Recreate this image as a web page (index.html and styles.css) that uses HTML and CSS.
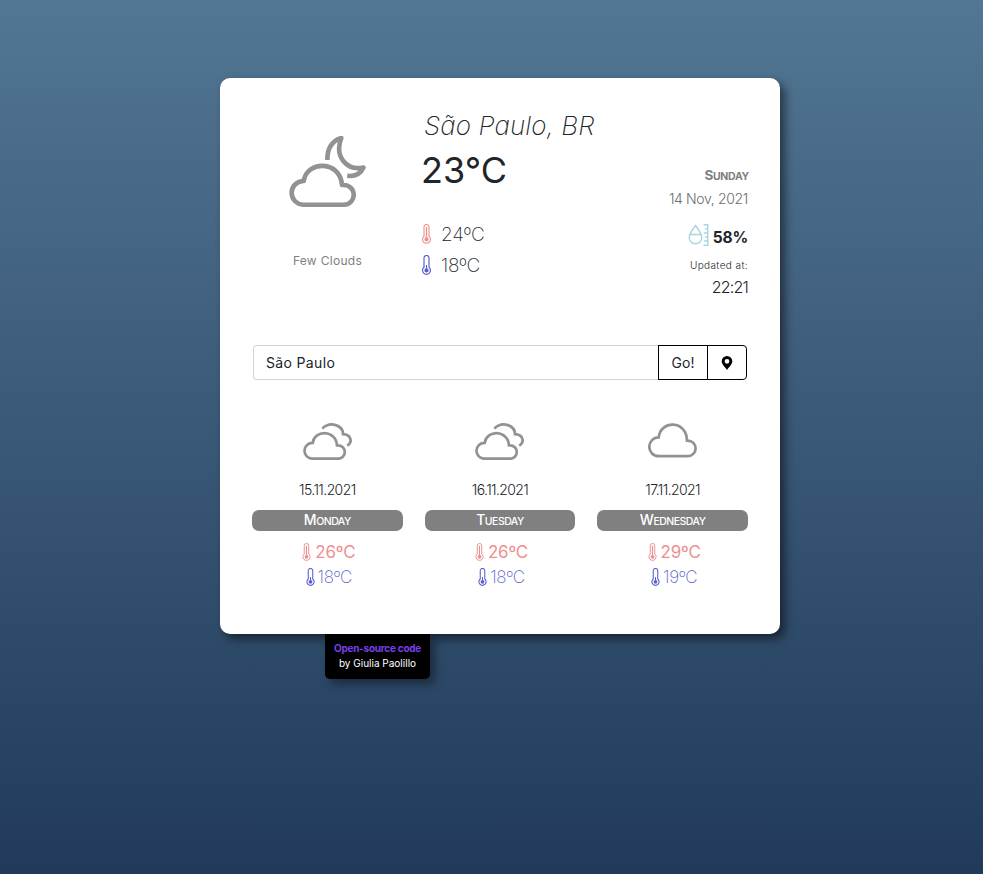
FILE: index.html
```html
<!DOCTYPE html>
<html lang="en">
<head>
<meta charset="utf-8">
<title>Weather</title>
<link rel="stylesheet" href="styles.css">
</head>
<body>
<svg class="defs" width="0" height="0" aria-hidden="true">
  <symbol id="thermo" viewBox="0 0 9 20">
    <path d="M2 12.2V3a2.5 2.5 0 0 1 5 0v9.2a4 4 0 1 1-5 0z" fill="none" stroke="currentColor" stroke-width="1.1"/>
    <path d="M4.5 3v12" stroke="currentColor" stroke-width="1.3"/>
    <circle cx="4.5" cy="15.4" r="2.1" fill="currentColor"/>
  </symbol>
  <symbol id="thermo-low" viewBox="0 0 9 20">
    <path d="M2 12.2V3a2.5 2.5 0 0 1 5 0v9.2a4 4 0 1 1-5 0z" fill="none" stroke="currentColor" stroke-width="1.2"/>
    <path d="M4.5 10v5" stroke="currentColor" stroke-width="1.1"/>
    <circle cx="4.5" cy="15.4" r="2.1" fill="currentColor"/>
  </symbol>
  <symbol id="clouds" viewBox="0 0 49 37">
    <g fill="none" stroke="#929292" stroke-width="2.7">
      <path d="M9.1 35.7H35.1a6.7 6.7 0 0 0 0-13.400H34C33 6.600 11.500 6.600 9.700 19.900A7.900 7.900 0 0 0 9.100 35.700z"/>
      <path d="M19.300 5.600C27.500-2.300 40 2.400 40 11.200C47.800 11.500 50.200 19 44.200 22.600"/>
    </g>
  </symbol>
</svg>
<main class="card">
  <section class="current">
    <div class="sky">
      <svg class="sky-icon" viewBox="0 0 77 72" fill="none" stroke="#929292" stroke-width="4.600" stroke-linejoin="round">
        <path d="M14.200 68.700H54.900A9.850 9.850 0 0 0 54.900 49H53C51.500 24.200 17.500 24.200 14.800 45A11.850 11.850 0 0 0 14.200 68.700z"/>
        <path d="M38.400 24C38 13 43 4.500 52.300 2C45 21 58 35 74.500 31.500C71.500 38 65 40.500 58.200 39.800"/>
      </svg>
      <div class="sky-label"><span>Few Clouds</span></div>
    </div>
    <div class="now">
      <h1 class="city"><span>São Paulo, BR</span></h1>
      <div class="temp"><span>23°C</span></div>
      <div class="range hot"><svg><use href="#thermo"/></svg><span>24ºC</span></div>
      <div class="range cold"><svg><use href="#thermo-low"/></svg><span>18ºC</span></div>
    </div>
    <div class="info">
      <div class="weekday"><span>Sunday</span></div>
      <div class="date"><span>14 Nov, 2021</span></div>
      <div class="humidity">
        <svg viewBox="0 0 21 22" fill="none" stroke="#a5d6e1" stroke-width="1.400"><path d="M7.500 1.500C5 5 1.200 9.500 1.200 13.500a6.300 6.300 0 0 0 12.600 0C13.800 9.500 10 5 7.500 1.500zM2.500 10.500H12.500"/><path d="M15.500.8H19.800V21.200H15.500M17 4.900H20M16 9H20M17 13H20M16 17H20"/></svg>
        <span>58%</span>
      </div>
      <div class="updated"><span>Updated at:</span></div>
      <div class="clock"><span>22:21</span></div>
    </div>
  </section>
  <form class="search">
    <div class="field"><span>São Paulo</span></div>
    <button type="button" class="go"><span>Go!</span></button>
    <button type="button" class="locate"><svg viewBox="0 0 12 14"><path fill-rule="evenodd" d="M6 0a5.300 5.300 0 0 1 5.300 5.300C11.300 8.500 8 11 6 14C4 11 .7 8.500.7 5.300A5.300 5.300 0 0 1 6 0zM6 2.900a2.400 2.400 0 1 0 0 4.800a2.400 2.400 0 0 0 0-4.800z"/></svg></button>
  </form>
  <section class="days">
    <article class="day">
      <svg class="day-icon" viewBox="0 0 49 37"><use href="#clouds"/></svg>
      <div class="day-date"><span>15.11.2021</span></div>
      <div class="day-name"><span>Monday</span></div>
      <div class="high"><svg><use href="#thermo"/></svg><span>26ºC</span></div>
      <div class="low"><svg><use href="#thermo-low"/></svg><span>18ºC</span></div>
    </article>
    <article class="day">
      <svg class="day-icon" viewBox="0 0 49 37"><use href="#clouds"/></svg>
      <div class="day-date"><span>16.11.2021</span></div>
      <div class="day-name"><span>Tuesday</span></div>
      <div class="high"><svg><use href="#thermo"/></svg><span>26ºC</span></div>
      <div class="low"><svg><use href="#thermo-low"/></svg><span>18ºC</span></div>
    </article>
    <article class="day">
      <svg class="day-icon" viewBox="0 0 49 37" fill="none" stroke="#929292" stroke-width="2.700"><path d="M10.700 32.600H39.800A7.800 7.800 0 0 0 39.800 17H39C38.500-3.700 12.500-3.700 10.700 13.800A9.400 9.400 0 0 0 10.700 32.600z" transform="translate(0 .6)"/></svg>
      <div class="day-date"><span>17.11.2021</span></div>
      <div class="day-name"><span>Wednesday</span></div>
      <div class="high"><svg><use href="#thermo"/></svg><span>29ºC</span></div>
      <div class="low"><svg><use href="#thermo-low"/></svg><span>19ºC</span></div>
    </article>
  </section>
</main>
<footer class="credit">
  <a><span>Open-source code</span></a>
  <div><span>by Giulia Paolillo</span></div>
</footer>
</body>
</html>
```
FILE: styles.css
```css
* { box-sizing: border-box; }
html { height: 100%; }
body {
  margin: 0;
  min-height: 874px;
  padding: 78px 0 0 220px;
  background: linear-gradient(#527693, #213a5a);
  font-family: Inter, "Open Sans", sans-serif;
  color: #212529;
  overflow: hidden;
}
.defs { display: block; position: absolute; }
svg { display: block; flex: none; }
.card {
  position: relative;
  width: 560px;
  height: 556px;
  padding: 30px 32px 0;
  background: #fff;
  border-radius: 10px;
  box-shadow: 5px 5px 10px rgba(0, 0, 0, .5);
}
.current {
  display: grid;
  grid-template-columns: 150px 1fr 130px;
  column-gap: 20px;
  height: 237px;
}
.sky { padding-top: 28px; }
.sky-icon { width: 77px; height: 72px; margin-left: 36.5px; }
.sky-label { height: 20px; line-height: 20px; margin-top: 43px; padding-left: 1px; text-align: center; font-size: 12px; letter-spacing: .3px; color: #808080; }
.city { margin: 0; padding-left: 2px; font-size: 26px; line-height: 36px; font-weight: 250; font-style: italic; letter-spacing: .1px; white-space: nowrap; }
.temp { font-size: 36px; line-height: 44px; margin: 4px 0 0 -1px; }
.range { display: flex; align-items: center; gap: 10px; height: 31px; font-size: 19px; font-weight: 200; letter-spacing: -.3px; }
.range svg { width: 9px; height: 20px; }
.range span { padding-top: 1px; }
.hot { margin-top: 26px; }
.hot svg { color: #ee9090; }
.cold svg { color: #5c60cf; }
.info { display: flex; flex-direction: column; align-items: flex-end; padding-top: 55px; }
.weekday span, .day-name span { display: inline-block; text-transform: uppercase; }
.weekday { font-size: 10.5px; line-height: 24px; height: 24px; font-weight: 700; letter-spacing: -.3px; margin-right: -1px; color: #808080; }
.weekday span::first-letter { font-size: 13.5px; }
.date { font-size: 14px; line-height: 24px; font-weight: 300; letter-spacing: -.35px; color: #6d6d6d; }
.humidity { display: flex; align-items: center; gap: 4px; height: 24px; margin-top: 14px; font-size: 15.5px; font-weight: 700; letter-spacing: -.2px; }
.humidity svg { width: 21px; height: 22px; margin-top: -4px; }
.updated { font-size: 10px; line-height: 16px; margin-top: 8px; letter-spacing: .4px; font-weight: 350; }
.clock { font-size: 16px; line-height: 24px; margin-top: 2px; font-weight: 350; letter-spacing: -.8px; }
.search { display: flex; height: 35px; margin: 0 1px; }
.field { flex: 1; border: 1px solid #ced4da; border-right: 0; border-radius: 4px 0 0 4px; padding-left: 12px; line-height: 33px; font-size: 14px; letter-spacing: .35px; }
.search button { display: flex; align-items: center; justify-content: center; padding: 0; border: 1px solid #000; background: #fff; font: 14px Inter, sans-serif; color: #212529; }
.go { width: 50px; }
.search .locate { width: 40px; margin-left: -1px; border-radius: 0 4px 4px 0; }
.locate svg { width: 12px; height: 14px; }
.days { display: grid; grid-template-columns: repeat(3, 1fr); column-gap: 22px; padding-top: 43px; }
.day { display: flex; flex-direction: column; align-items: center; }
.day-icon { width: 49px; height: 37px; }
.day-date { margin-top: 20px; line-height: 20px; font-size: 14px; font-weight: 350; letter-spacing: -.6px; }
.day-name { align-self: stretch; height: 21px; line-height: 20px; margin-top: 10px; background: #808080; color: #fff; border-radius: 7px; text-align: center; font-size: 10.5px; font-weight: 500; letter-spacing: -.5px; }
.day-name span::first-letter { font-size: 14px; }
.high, .low { display: flex; align-items: center; gap: 4px; height: 25px; padding-left: 3px; font-size: 17px; letter-spacing: -.2px; }
.high { margin-top: 8px; color: #ee9090; }
.low { color: #5c60cf; gap: 3px; font-weight: 200; letter-spacing: -.4px; }
.high svg, .low svg { width: 9px; height: 18px; }
.credit { width: 105px; height: 45px; margin-left: 105px; padding-top: 7px; background: #000; border-radius: 0 0 5px 5px; box-shadow: 5px 5px 10px rgba(0, 0, 0, .4); text-align: center; font-size: 10px; line-height: 15px; color: #fff; white-space: nowrap; }
.credit a { color: #7c40e8; font-weight: 700; letter-spacing: -.25px; }
```
